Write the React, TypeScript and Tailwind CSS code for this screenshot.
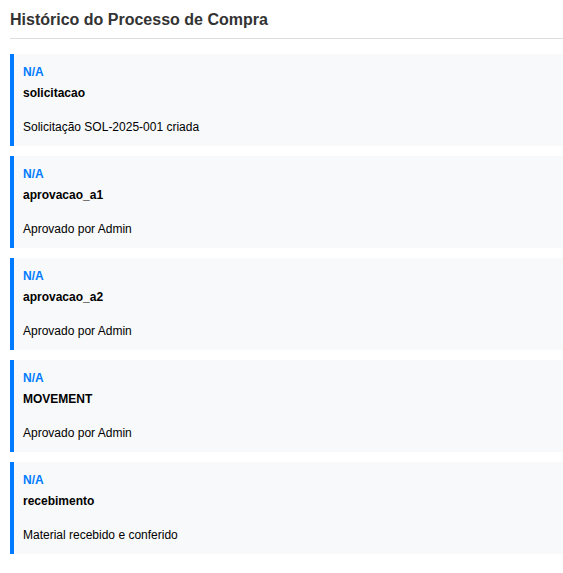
import React from "react";

const items = [
  { tipo: "solicitacao", desc: "Solicitação SOL-2025-001 criada" },
  { tipo: "aprovacao_a1", desc: "Aprovado por Admin" },
  { tipo: "aprovacao_a2", desc: "Aprovado por Admin" },
  { tipo: "MOVEMENT", desc: "Aprovado por Admin" },
  { tipo: "recebimento", desc: "Material recebido e conferido" },
];

export default function App() {
  return (
    <div
      className="bg-white pl-[10px] pt-[10px] min-h-[573px]"
      style={{ fontFamily: '"Liberation Sans", Arial, sans-serif' }}
    >
      <h2 className="text-[16px] leading-[20px] font-bold text-[#333333] pb-[8px] border-b border-[#dddddd] mb-[15px]">
        Histórico do Processo de Compra
      </h2>
      <div className="flex flex-col gap-[10px]">
        {items.map((it, i) => (
          <div
            key={i}
            className="bg-[#f8f9fa] border-l-4 border-[#007bff] pl-[9px] pr-[10px] pt-[10px] pb-[10px] text-[12px] leading-[17px]"
          >
            <div className="font-bold text-[#007bff]">N/A</div>
            <div className="font-bold text-black mt-[4px]">{it.tipo}</div>
            <div className="text-black mt-[17px]">{it.desc}</div>
          </div>
        ))}
      </div>
    </div>
  );
}
